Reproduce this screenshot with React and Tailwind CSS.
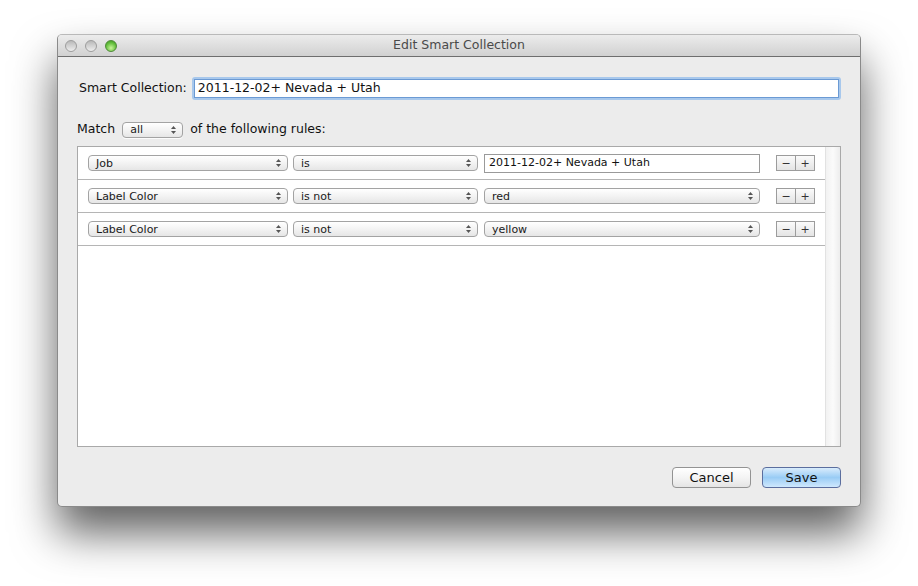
import React from "react";

const font = { fontFamily: '"DejaVu Sans", "Lucida Grande", sans-serif' };

const Arrows = () => (
  <svg width="5" height="8" viewBox="0 0 5 8" className="shrink-0">
    <path d="M2.5 0 L5 3 L0 3 Z" fill="#555" />
    <path d="M2.5 8 L5 5 L0 5 Z" fill="#555" />
  </svg>
);

const Popup = ({ label, w }) => (
  <div
    className={"h-[16px] flex items-center justify-between pl-[7px] pr-[6px] rounded-[4px] border border-[#a3a3a3] bg-gradient-to-b from-[#ffffff] via-[#f3f3f3] to-[#e6e6e6] text-[11px] text-[#1a1a1a] shadow-[0_1px_0_rgba(255,255,255,0.8)] " + w}
  >
    <span className="leading-none">{label}</span>
    <Arrows />
  </div>
);

const MinusPlus = () => (
  <div className="flex h-[16px] w-[39px] border border-[#9c9c9c] bg-gradient-to-b from-[#fbfbfb] to-[#e4e4e4] text-[11px] text-[#333]">
    <div className="flex-1 flex items-center justify-center border-r border-[#9c9c9c] leading-none">−</div>
    <div className="flex-1 flex items-center justify-center leading-none">+</div>
  </div>
);

const Row = ({ field, op, value, isText }) => (
  <div className="h-[33px] flex items-center border-b border-[#b5b5b5] pl-[10px] pr-[10px]">
    <Popup label={field} w="w-[200px]" />
    <div className="ml-[5px]">
      <Popup label={op} w="w-[185px]" />
    </div>
    <div className="ml-[6px]">
      {isText ? (
        <div className="w-[276px] h-[19px] flex items-center px-[4px] border border-[#9a9a9a] bg-white text-[11px] text-[#111]">
          {value}
        </div>
      ) : (
        <Popup label={value} w="w-[276px]" />
      )}
    </div>
    <div className="ml-[16px]">
      <MinusPlus />
    </div>
  </div>
);

export default function App() {
  return (
    <div className="w-[918px] h-[586px] bg-white overflow-hidden pl-[57px] pt-[34px]" style={font}>
      <div className="w-[804px] h-[473px] flex flex-col bg-[#ececec] rounded-[5px] border border-[#8a8a8a] border-t-[#b9b9b9] shadow-[0_26px_44px_rgba(0,0,0,0.62)] overflow-hidden">
        {/* title bar */}
        <div className="h-[22px] shrink-0 relative flex items-center justify-center bg-gradient-to-b from-[#ececec] to-[#d1d1d1] border-b border-[#6e6e6e]">
          <div className="absolute left-[7px] top-[5px] flex gap-[8px]">
            <div className="w-[12px] h-[12px] rounded-full bg-gradient-to-b from-[#b9b9b9] to-[#eeeeee] border border-[#9d9d9d]" />
            <div className="w-[12px] h-[12px] rounded-full bg-gradient-to-b from-[#b9b9b9] to-[#eeeeee] border border-[#9d9d9d]" />
            <div className="w-[12px] h-[12px] rounded-full bg-[radial-gradient(circle_at_50%_70%,#c9f59a,#62be3b_60%,#3c8f20)] border border-[#4e8a37]" />
          </div>
          <span className="text-[12.5px] text-[#4a4a4a]">Edit Smart Collection</span>
        </div>

        {/* body */}
        <div className="flex-1 flex flex-col px-[19px] pt-[20px] pb-[19px]">
          <div className="h-[23px] flex items-center">
            <span className="ml-[2px] text-[12.5px] text-[#111] mr-[5px]">Smart Collection:</span>
            <div className="flex-1 h-[23px] p-[2px] rounded-[3px] bg-[#a8c8ec]">
              <div className="h-full flex items-center px-[3px] bg-white border border-[#6b9ad4] text-[12.5px] text-[#111]">
                2011-12-02+ Nevada + Utah
              </div>
            </div>
          </div>

          <div className="h-[17px] mt-[21px] flex items-center text-[12.5px] text-[#111]">
            <span>Match</span>
            <div className="ml-[7px] mr-[7px]">
              <Popup label="all" w="w-[61px]" />
            </div>
            <span>of the following rules:</span>
          </div>

          <div className="mt-[8px] h-[301px] flex border border-[#a9a9a9] bg-white">
            <div className="flex-1 flex flex-col">
              <Row field="Job" op="is" value="2011-12-02+ Nevada + Utah" isText />
              <Row field="Label Color" op="is not" value="red" />
              <Row field="Label Color" op="is not" value="yellow" />
            </div>
            <div className="w-[15px] bg-gradient-to-r from-[#f2f2f2] via-[#fbfbfb] to-[#ededed] border-l border-[#e2e2e2]" />
          </div>

          <div className="mt-[20px] flex justify-end gap-[11px]">
            <button className="w-[79px] h-[21px] rounded-[4px] border border-[#939393] bg-gradient-to-b from-[#ffffff] via-[#f4f4f4] to-[#e5e5e5] text-[13px] text-[#111] leading-none">
              Cancel
            </button>
            <button className="w-[79px] h-[21px] rounded-[4px] border border-[#5b6e9e] bg-gradient-to-b from-[#d9ecfc] via-[#99ccf5] to-[#cfe8fd] text-[13px] text-[#111] leading-none">
              Save
            </button>
          </div>
        </div>
      </div>
    </div>
  );
}
